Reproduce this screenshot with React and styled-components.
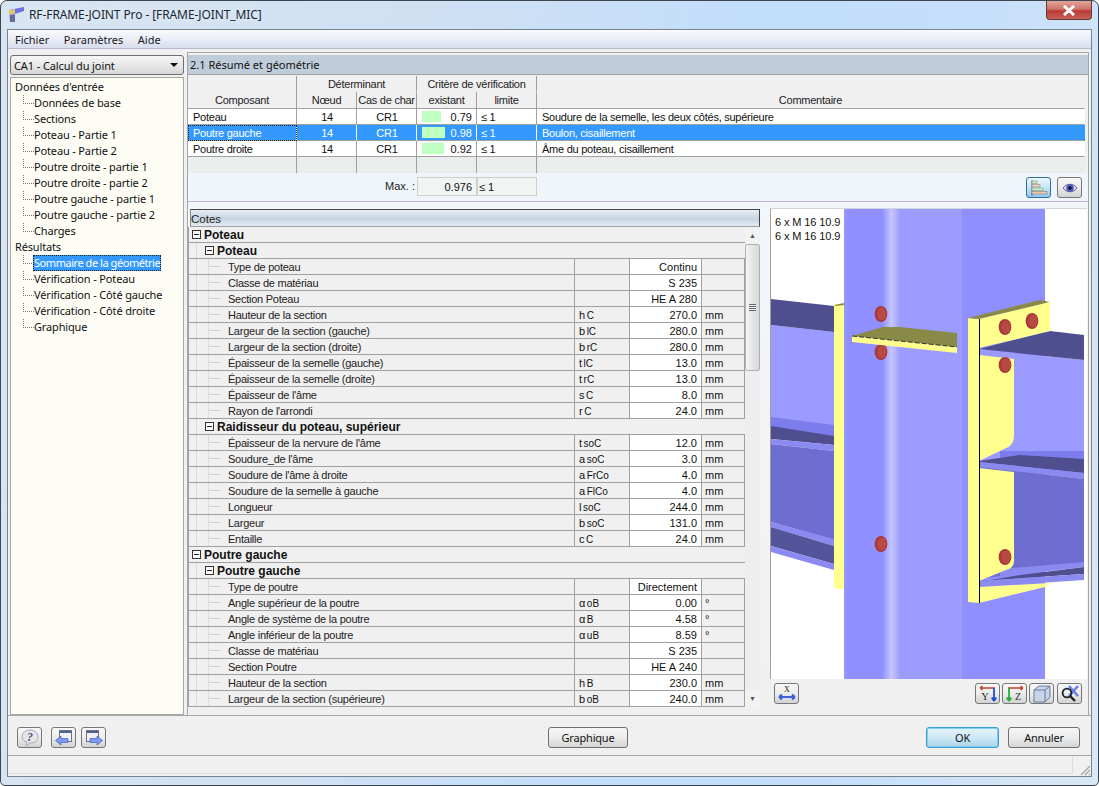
import React from "react";
import styled, { createGlobalStyle } from "styled-components";

const GlobalStyle = createGlobalStyle`
  html, body {
    margin: 0;
    padding: 0;
    background: #fff;
    overflow: hidden;
  }
  * {
    box-sizing: border-box;
  }
`;

const UI_FONT = `"Noto Sans", "Liberation Sans", sans-serif`;
const TABLE_FONT = `"Liberation Sans", Arial, sans-serif`;

const TREE_INPUT = [
  "Données de base",
  "Sections",
  "Poteau - Partie 1",
  "Poteau - Partie 2",
  "Poutre droite - partie 1",
  "Poutre droite - partie 2",
  "Poutre gauche - partie 1",
  "Poutre gauche - partie 2",
  "Charges",
];

const TREE_RESULTS = [
  "Sommaire de la géométrie",
  "Vérification - Poteau",
  "Vérification - Côté gauche",
  "Vérification - Côté droite",
  "Graphique",
];

const SUMMARY = [
  { name: "Poteau", ratio: "0.79", bar: 19, comment: "Soudure de la semelle, les deux côtés, supérieure" },
  { name: "Poutre gauche", ratio: "0.98", bar: 23, comment: "Boulon, cisaillement", selected: true },
  { name: "Poutre droite", ratio: "0.92", bar: 22, comment: "Âme du poteau, cisaillement" },
];

const ROWS = [
  { group: 1, label: "Poteau" },
  { group: 2, label: "Poteau" },
  { label: "Type de poteau", value: "Continu" },
  { label: "Classe de matériau", value: "S 235" },
  { label: "Section Poteau", value: "HE A 280" },
  { label: "Hauteur de la section", sym: "h", sub: "C", value: "270.0", unit: "mm" },
  { label: "Largeur de la section (gauche)", sym: "b", sub: "lC", value: "280.0", unit: "mm" },
  { label: "Largeur de la section (droite)", sym: "b", sub: "rC", value: "280.0", unit: "mm" },
  { label: "Épaisseur de la semelle (gauche)", sym: "t", sub: "lC", value: "13.0", unit: "mm" },
  { label: "Épaisseur de la semelle (droite)", sym: "t", sub: "rC", value: "13.0", unit: "mm" },
  { label: "Épaisseur de l'âme", sym: "s", sub: "C", value: "8.0", unit: "mm" },
  { label: "Rayon de l'arrondi", sym: "r", sub: "C", value: "24.0", unit: "mm" },
  { group: 2, label: "Raidisseur du poteau, supérieur" },
  { label: "Épaisseur de la nervure de l'âme", sym: "t", sub: "soC", value: "12.0", unit: "mm" },
  { label: "Soudure_de l'âme", sym: "a", sub: "soC", value: "3.0", unit: "mm" },
  { label: "Soudure de l'âme à droite", sym: "a", sub: "FrCo", value: "4.0", unit: "mm" },
  { label: "Soudure de la semelle à gauche", sym: "a", sub: "FlCo", value: "4.0", unit: "mm" },
  { label: "Longueur", sym: "l", sub: "soC", value: "244.0", unit: "mm" },
  { label: "Largeur", sym: "b", sub: "soC", value: "131.0", unit: "mm" },
  { label: "Entaille", sym: "c", sub: "C", value: "24.0", unit: "mm" },
  { group: 1, label: "Poutre gauche" },
  { group: 2, label: "Poutre gauche" },
  { label: "Type de poutre", value: "Directement" },
  { label: "Angle supérieur de la poutre", sym: "α", sub: "oB", value: "0.00", unit: "°" },
  { label: "Angle de système de la poutre", sym: "α", sub: "B", value: "4.58", unit: "°" },
  { label: "Angle inférieur de la poutre", sym: "α", sub: "uB", value: "8.59", unit: "°" },
  { label: "Classe de matériau", value: "S 235" },
  { label: "Section Poutre", value: "HE A 240" },
  { label: "Hauteur de la section", sym: "h", sub: "B", value: "230.0", unit: "mm" },
  { label: "Largeur de la section (supérieure)", sym: "b", sub: "oB", value: "240.0", unit: "mm" },
];

const AppIcon = () => (
  <svg width="16" height="16" viewBox="0 0 16 16">
    <path d="M0 3 L15 0 V4 L6 7 V15 H1 Z" fill="#6f6fe6" />
    <path d="M0 3 L6 2 V7 L0 8 Z" fill="#d9c870" />
    <path d="M1 8 H6 V15 H1 Z" fill="#6a6a9c" />
  </svg>
);

const HelpIcon = () => (
  <svg width="20" height="18" viewBox="0 0 20 18">
    <path d="M10 1 C15 1 18 4 18 8 C18 12 15 14 10 14 L6 17 L7 13 C4 12 2 11 2 8 C2 4 5 1 10 1 Z" fill="#e6e6ea" stroke="#a8a8b2" />
    <text x="10" y="12" fontSize="12" fontWeight="bold" fontStyle="italic" textAnchor="middle" fill="#50507e" fontFamily="Liberation Serif">?</text>
  </svg>
);

const WindowArrowIcon = ({ right }) => (
  <svg width="20" height="18" viewBox="0 0 20 18">
    <rect x={right ? 2.5 : 5.5} y="1.5" width="12" height="11" fill="#f0f0f4" stroke="#707080" />
    <rect x={right ? 3 : 6} y="2" width="11" height="2" fill="#4a6492" />
    <path
      d={right ? "M6 9.5 H13 V7 L18.5 11.5 L13 16 V13.5 H6 Z" : "M14 9.5 H7 V7 L1.5 11.5 L7 16 V13.5 H14 Z"}
      fill="#7a9cf4"
      stroke="#4a5ab0"
      strokeWidth="0.7"
    />
  </svg>
);

const BarsIcon = () => (
  <svg width="20" height="18" viewBox="0 0 20 18">
    <path d="M3 1 V17" stroke="#5a6a7a" />
    <rect x="3" y="2" width="5" height="2.5" fill="#d8e8c0" stroke="#7a8a70" strokeWidth="0.5" />
    <rect x="3" y="5.5" width="8" height="2.5" fill="#f0d0c8" stroke="#8a7a70" strokeWidth="0.5" />
    <rect x="3" y="9" width="11" height="2.5" fill="#c8f0c8" stroke="#708a70" strokeWidth="0.5" />
    <rect x="3" y="12.5" width="15" height="2.5" fill="#f0c8b8" stroke="#8a7060" strokeWidth="0.5" />
  </svg>
);

const EyeIcon = () => (
  <svg width="16" height="12" viewBox="0 0 16 12">
    <path d="M1 6 C4 1 12 1 15 6 C12 11 4 11 1 6 Z" fill="#dcdce8" stroke="#50506a" strokeWidth="0.8" />
    <circle cx="8" cy="6" r="3.8" fill="#4a5ac8" />
    <circle cx="8" cy="6" r="1.7" fill="#10102a" />
  </svg>
);

const AxisXIcon = () => (
  <svg width="20" height="18" viewBox="0 0 20 18">
    <text x="10" y="7" fontSize="8" textAnchor="middle" fill="#222" fontFamily="Liberation Serif">X</text>
    <path d="M2 12 H18 M2 12 L5 9.5 M2 12 L5 14.5 M18 12 L15 9.5 M18 12 L15 14.5" stroke="#3f5fd8" strokeWidth="2" fill="none" />
  </svg>
);

const AxisYIcon = () => (
  <svg width="20" height="18" viewBox="0 0 20 18">
    <path d="M2 3 H17 M2 3 L4.5 1 M2 3 L4.5 5" stroke="#c84030" strokeWidth="1.6" fill="none" />
    <path d="M16 3 V16 M16 16 L13.8 12.5 M16 16 L18.2 12.5" stroke="#2050d0" strokeWidth="1.8" fill="none" />
    <text x="7" y="15" fontSize="10" textAnchor="middle" fill="#222" fontFamily="Liberation Serif">Y</text>
  </svg>
);

const AxisZIcon = () => (
  <svg width="20" height="18" viewBox="0 0 20 18">
    <path d="M3 3 H18 M18 3 L15.5 1 M18 3 L15.5 5" stroke="#c84030" strokeWidth="1.6" fill="none" />
    <path d="M4 3 V16 M4 16 L1.8 12.5 M4 16 L6.2 12.5" stroke="#20b040" strokeWidth="1.8" fill="none" />
    <text x="13" y="15" fontSize="10" textAnchor="middle" fill="#333" fontFamily="Liberation Serif">Z</text>
  </svg>
);

const CubeIcon = () => (
  <svg width="20" height="18" viewBox="0 0 20 18">
    <path d="M2 5 L7 1 H18 V12 L13 17 H2 Z" fill="#c8d4e8" stroke="#6a7a98" />
    <path d="M2 5 H13 V17 M13 5 L18 1" fill="none" stroke="#6a7a98" />
  </svg>
);

const ZoomXIcon = () => (
  <svg width="20" height="18" viewBox="0 0 20 18">
    <path d="M9 1 L18 11 M18 1 L9 11" stroke="#6a80e8" strokeWidth="2.6" />
    <circle cx="7" cy="8" r="4.4" fill="none" stroke="#202020" strokeWidth="1.8" />
    <path d="M10 11 L15 16" stroke="#202020" strokeWidth="2.4" />
  </svg>
);

const Bolt = ({ x, y }) => (
  <g>
    <ellipse cx={x} cy={y} rx="6.4" ry="8" fill="#a83a3a" />
    <ellipse cx={x + 1} cy={y} rx="4.6" ry="6.2" fill="#b84a44" />
  </g>
);

// joint drawing, coordinates are the page pixels of the screenshot
const JointDrawing = () => (
  <svg width="315" height="470" viewBox="771 210 315 470">
    <defs>
      <linearGradient id="column" gradientUnits="userSpaceOnUse" x1="844" x2="1045" y1="0" y2="0">
        <stop offset="0" stopColor="#9696ff" />
        <stop offset="0.03" stopColor="#8f8fff" />
        <stop offset="0.19" stopColor="#8f8fff" />
        <stop offset="0.235" stopColor="#c6c6ff" />
        <stop offset="0.28" stopColor="#9c9cff" />
        <stop offset="0.585" stopColor="#9c9cff" />
        <stop offset="0.59" stopColor="#8f8fff" />
        <stop offset="1" stopColor="#8f8fff" />
      </linearGradient>
    </defs>

    {/* left beam */}
    <polygon points="771,326 834,333 834,440 771,430" fill="#9b9bff" />
    <polygon points="771,300 834,307 834,333 771,326" fill="#4f4f90" />
    <polygon points="771,418 834,426 834,438 771,428" fill="#7c7cec" />
    <polygon points="771,427 834,437 834,446 771,440" fill="#4f4f90" />
    <polygon points="771,440 834,446 834,452 771,445" fill="#8a8af0" />
    <polygon points="771,445 834,452 834,541 771,523" fill="#6e6ed0" />
    <polygon points="771,523 834,540 834,547 771,528" fill="#8a8af0" />
    <polygon points="771,528 834,547 834,565 771,547" fill="#54549a" />
    <polygon points="771,547 834,565 834,571 771,553" fill="#8a8af0" />
    <polygon points="834,306 844,304 844,590 837,590 834,588" fill="#ffff8e" />
    <polygon points="834,306 844,304 844,306 836,307" fill="#8a8a48" />

    {/* column */}
    <rect x="844" y="210" width="201" height="470" fill="url(#column)" />

    <Bolt x={881} y={315} />
    <Bolt x={881} y={353} />
    <Bolt x={881} y={545} />

    {/* shelf plate */}
    <polygon points="852,337 883,328 900,328 957,334 957,348" fill="#8a8a48" />
    <polygon points="852,337 957,348 957,354 852,343" fill="#ffff8e" />
    <line x1="852" y1="337" x2="957" y2="348" stroke="#111" strokeWidth="0.8" strokeDasharray="5 2" />

    {/* right beam */}
    <polygon points="979,350 1084,361 1084,480 979,468" fill="#9b9bff" />
    <polygon points="979,350 1050,332 1084,336 1084,361" fill="#4f4f90" />
    <polygon points="1000,452 1084,452 1084,460 1000,460" fill="#7c7cec" />
    <polygon points="979,462 1020,456 1084,460 1084,474 979,463" fill="#4f4f90" />
    <polygon points="979,463 1084,474 1084,480 979,468" fill="#8a8af0" />
    <polygon points="979,468 1084,480 1084,566 979,580" fill="#6e6ed0" />
    <polygon points="1000,570 1084,563 1084,568 1000,578" fill="#8a8af0" />
    <polygon points="979,583 1020,576 1084,568 1084,575 979,582" fill="#4f4f90" />
    <polygon points="979,582 1084,575 1084,581 979,588" fill="#8a8af0" />

    {/* end plate */}
    <polygon points="968,319 979,320 979,604 968,603" fill="#ffff8e" />
    <polygon points="968,319 1040,301 1050,303 979,320" fill="#8a8a48" />
    <polygon points="979,320 1050,303 1050,332 979,349" fill="#ffff8e" />
    <path d="M979 356 L1014 360 V437 Q1014 447 1004 450 L979 462 Z" fill="#ffff8e" />
    <path d="M979 469 L1014 473 V562 Q1014 569 1006 571 L979 582 Z" fill="#ffff8e" />
    <polygon points="979,588 1050,584 1045,588 979,604" fill="#ffff8e" />
    <line x1="979.5" y1="320" x2="979.5" y2="604" stroke="#000" />

    <Bolt x={1005} y={328} />
    <Bolt x={1032} y={322} />
    <Bolt x={1005} y={366} />
    <Bolt x={1005} y={558} />
  </svg>
);

const App = () => {
  return (
    <>
      <GlobalStyle />
      <Window>
        <TitleBar>
          <AppIcon />
          <TitleText>RF-FRAME-JOINT Pro - [FRAME-JOINT_MIC]</TitleText>
          <CloseButton>
            <svg width="14" height="11" viewBox="0 0 14 11">
              <path d="M2 1 L12 10 M12 1 L2 10" stroke="#fff" strokeWidth="3" />
            </svg>
          </CloseButton>
        </TitleBar>

        <Client>
          <MenuBar>
            <MenuItem>Fichier</MenuItem>
            <MenuItem>Paramètres</MenuItem>
            <MenuItem>Aide</MenuItem>
          </MenuBar>

          <Body>
            <LeftPane>
              <Combo>
                CA1 - Calcul du joint
                <ComboArrow />
              </Combo>
              <Tree>
                <TreeRoot>Données d'entrée</TreeRoot>
                {TREE_INPUT.map((item) => (
                  <TreeChild key={item}>
                    <span>{item}</span>
                  </TreeChild>
                ))}
                <TreeRoot>Résultats</TreeRoot>
                {TREE_RESULTS.map((item, i) => (
                  <TreeChild key={item}>
                    <TreeText $selected={i === 0}>{item}</TreeText>
                  </TreeChild>
                ))}
              </Tree>
            </LeftPane>

            <RightPane>
              <SectionTitle>2.1 Résumé et géométrie</SectionTitle>

              <SummaryTable>
                <SummaryHead $span="1 / 3" $column="1" $bottom>Composant</SummaryHead>
                <SummaryHead $column="2 / 4" $noBorderBottom>Déterminant</SummaryHead>
                <SummaryHead $column="4 / 6" $noBorderBottom>Critère de vérification</SummaryHead>
                <SummaryHead $span="1 / 3" $column="6" $bottom $last>Commentaire</SummaryHead>
                <SummaryHead $column="2">Nœud</SummaryHead>
                <SummaryHead $column="3">Cas de char</SummaryHead>
                <SummaryHead $column="4">existant</SummaryHead>
                <SummaryHead $column="5">limite</SummaryHead>

                {SUMMARY.map((row) => (
                  <React.Fragment key={row.name}>
                    <SummaryCell $selected={row.selected} $focus={row.selected}>{row.name}</SummaryCell>
                    <SummaryCell $selected={row.selected} $center>14</SummaryCell>
                    <SummaryCell $selected={row.selected} $center>CR1</SummaryCell>
                    <SummaryCell $selected={row.selected}>
                      <RatioBar $width={row.bar} />
                      <RatioValue>{row.ratio}</RatioValue>
                    </SummaryCell>
                    <SummaryCell $selected={row.selected} $limit>≤ 1</SummaryCell>
                    <SummaryCell $selected={row.selected} $last>{row.comment}</SummaryCell>
                  </React.Fragment>
                ))}

                <EmptyCell />
                <EmptyCell />
                <EmptyCell />
                <EmptyCell />
                <EmptyCell />
                <EmptyCell $last />
              </SummaryTable>

              <MaxRow>
                <MaxLabel>Max. :</MaxLabel>
                <MaxBox $right>0.976</MaxBox>
                <MaxBox>≤ 1</MaxBox>
                <MaxTools>
                  <ToolButton $active>
                    <BarsIcon />
                  </ToolButton>
                  <ToolButton>
                    <EyeIcon />
                  </ToolButton>
                </MaxTools>
              </MaxRow>

              <Lower>
                <DetailPane>
                  <DetailHeader>Cotes</DetailHeader>
                  <DetailBody>
                    <DetailRows>
                      {ROWS.map((row, i) =>
                        row.group ? (
                          <GroupRow key={i} $level={row.group}>
                            <Toggle />
                            {row.label}
                          </GroupRow>
                        ) : (
                          <ParamRow key={i}>
                            <ParamLabel>
                              <TreeTick />
                              {row.label}
                            </ParamLabel>
                            <ParamSymbol>
                              {row.sym}
                              {row.sub && <Sub>{row.sub}</Sub>}
                            </ParamSymbol>
                            <ParamValue>{row.value}</ParamValue>
                            <ParamUnit>{row.unit}</ParamUnit>
                          </ParamRow>
                        )
                      )}
                    </DetailRows>
                    <ScrollBar>
                      <ScrollArrow>▲</ScrollArrow>
                      <ScrollThumb>
                        <ThumbGrip />
                      </ScrollThumb>
                      <ScrollTrack />
                      <ScrollArrow>▼</ScrollArrow>
                    </ScrollBar>
                  </DetailBody>
                </DetailPane>

                <GraphicPane>
                  <GraphicView>
                    <JointDrawing />
                    <BoltNotes>
                      <div>6 x M 16 10.9</div>
                      <div>6 x M 16 10.9</div>
                    </BoltNotes>
                  </GraphicView>
                  <GraphicTools>
                    <ToolButton>
                      <AxisXIcon />
                    </ToolButton>
                    <ToolSpacer />
                    <ToolButton>
                      <AxisYIcon />
                    </ToolButton>
                    <ToolButton>
                      <AxisZIcon />
                    </ToolButton>
                    <ToolButton>
                      <CubeIcon />
                    </ToolButton>
                    <ToolButton $leftGap={1}>
                      <ZoomXIcon />
                    </ToolButton>
                  </GraphicTools>
                </GraphicPane>
              </Lower>
            </RightPane>
          </Body>

          <Footer>
            <FooterTools>
              <ToolButton $rightGap={4}>
                <HelpIcon />
              </ToolButton>
              <ToolButton>
                <WindowArrowIcon />
              </ToolButton>
              <ToolButton>
                <WindowArrowIcon right />
              </ToolButton>
            </FooterTools>
            <DialogButton $width={80} $left={442}>Graphique</DialogButton>
            <FooterActions>
              <DialogButton $width={73} $primary>OK</DialogButton>
              <DialogButton $width={72}>Annuler</DialogButton>
            </FooterActions>
          </Footer>

          <StatusBar>
            <StatusField />
            <ResizeGrip>
              <svg width="12" height="12" viewBox="0 0 12 12">
                <path d="M11 2 L2 11 M11 6 L6 11 M11 10 L10 11" stroke="#a0a8b0" strokeWidth="1.4" />
              </svg>
            </ResizeGrip>
          </StatusBar>
        </Client>
      </Window>
    </>
  );
};

export default App;

const Window = styled.div`
  width: 1099px;
  height: 786px;
  display: flex;
  flex-direction: column;
  padding: 0 6px 8px;
  border: 1px solid #3c4650;
  border-radius: 7px 7px 5px 5px;
  background: linear-gradient(
    100deg,
    #d8e5f2 0%,
    #cfe0f3 35%,
    #c2defb 62%,
    #c6dffa 80%,
    #d9e8f5 100%
  );
  font-family: ${TABLE_FONT};
  font-size: 11px;
  color: #111;
`;

const TitleBar = styled.div`
  position: relative;
  height: 28px;
  flex: none;
  display: flex;
  align-items: center;
  gap: 4px;
  padding: 0 0 0 2px;
`;

const TitleText = styled.div`
  font-family: ${UI_FONT};
  font-size: 12px;
  letter-spacing: -0.1px;
  color: #1c2430;
  margin-top: -1px;
  text-shadow: 0 0 6px #eef5fc;
`;

const CloseButton = styled.div`
  position: absolute;
  top: 0;
  right: 0;
  width: 46px;
  height: 19px;
  display: flex;
  align-items: center;
  justify-content: center;
  border: 1px solid #6a3a30;
  border-top: none;
  border-radius: 0 0 4px 4px;
  background: linear-gradient(#e2a49a 0%, #cf7468 45%, #b93a34 55%, #c8605a 100%);
`;

const Client = styled.div`
  flex: 1;
  min-height: 0;
  display: flex;
  flex-direction: column;
  border: 1px solid #77838f;
  background: #f0f0f0;
`;

const MenuBar = styled.div`
  height: 19px;
  flex: none;
  display: flex;
  align-items: center;
  gap: 14.5px;
  padding-left: 7px;
  background: linear-gradient(#fafafc 0%, #eceef6 45%, #d9deee 100%);
  border-bottom: 1px solid #b6bcd0;
`;

const MenuItem = styled.span`
  font-family: ${UI_FONT};
  font-size: 11px;
  color: #1a1a24;
`;

const Body = styled.div`
  height: 667px;
  flex: none;
  display: flex;
  gap: 3px;
  padding: 3px 2px 0 2px;
  border-bottom: 1px solid #a6a6a6;
`;

const LeftPane = styled.div`
  width: 174px;
  flex: none;
  display: flex;
  flex-direction: column;
  padding-top: 3px;
`;

const Combo = styled.div`
  position: relative;
  height: 20px;
  flex: none;
  display: flex;
  align-items: center;
  padding-left: 3px;
  font-family: ${UI_FONT};
  font-size: 11px;
  letter-spacing: -0.1px;
  border: 1px solid #707070;
  border-radius: 3px;
  background: linear-gradient(#f6f6f6 0%, #e8e8e8 50%, #d6d6d6 100%);
`;

const ComboArrow = styled.span`
  position: absolute;
  right: 5px;
  top: 7px;
  border-left: 4px solid transparent;
  border-right: 4px solid transparent;
  border-top: 4px solid #111;
`;

const Tree = styled.div`
  flex: 1;
  margin-top: 2px;
  padding: 1px 0 0 4px;
  background: #fdfdf5;
  border: 1px solid #a6a6a6;
  font-family: ${UI_FONT};
  font-size: 11px;
  letter-spacing: -0.15px;
`;

const TreeRoot = styled.div`
  height: 16px;
  line-height: 16px;
  color: #111;
`;

const TreeChild = styled.div`
  position: relative;
  height: 16px;
  line-height: 16px;
  padding-left: 19px;
  white-space: nowrap;

  &::before {
    content: "";
    position: absolute;
    left: 8px;
    top: 0;
    width: 10px;
    height: 8px;
    border-left: 1px dotted #777;
    border-bottom: 1px dotted #777;
  }
`;

const TreeText = styled.span`
  display: inline-block;
  height: 16px;
  padding: 0 1px;
  margin-left: -1px;
  letter-spacing: ${(props) => (props.$selected ? "-0.45px" : "inherit")};
  color: ${(props) => (props.$selected ? "#fff" : "inherit")};
  background: ${(props) => (props.$selected ? "#3399ff" : "transparent")};
  outline: ${(props) => (props.$selected ? "1px dotted #222" : "none")};
  outline-offset: -1px;
`;

const RightPane = styled.div`
  flex: 1;
  min-width: 0;
  display: flex;
  flex-direction: column;
  border: 1px solid #a6a6a6;
  border-bottom: none;
  padding-top: 2px;
`;

const SectionTitle = styled.div`
  height: 20px;
  flex: none;
  display: flex;
  align-items: center;
  padding-left: 2px;
  font-family: ${UI_FONT};
  font-size: 11px;
  background: #bfcddb;
  border-bottom: 1px solid #a0a0a0;
`;

const SummaryTable = styled.div`
  display: grid;
  grid-template-columns: 109px 60px 60px 60px 60px 548px;
  grid-template-rows: 16px 17px 16px 16px 16px 16px;
  margin-top: 1px;
  flex: none;
  letter-spacing: -0.25px;
`;

const SummaryHead = styled.div`
  grid-column: ${(props) => props.$column};
  grid-row: ${(props) => props.$span || "auto"};
  display: flex;
  align-items: ${(props) => (props.$bottom ? "flex-end" : "center")};
  justify-content: center;
  padding-bottom: ${(props) => (props.$bottom ? "2px" : "0")};
  background: #f0f0f0;
  color: #222;
  border-right: 1px solid ${(props) => (props.$last ? "transparent" : "#a0a0a0")};
  border-bottom: 1px solid ${(props) => (props.$noBorderBottom ? "transparent" : "#a0a0a0")};
  white-space: nowrap;
`;

const SummaryCell = styled.div`
  position: relative;
  display: flex;
  align-items: center;
  justify-content: ${(props) => (props.$center ? "center" : "flex-start")};
  padding: 0 4px 0 ${(props) => (props.$limit ? "4px" : "5px")};
  white-space: nowrap;
  color: ${(props) => (props.$selected ? "#fff" : "#111")};
  background: ${(props) => (props.$selected ? "#3399ff" : "#fff")};
  border-right: 1px solid ${(props) => (props.$last ? "transparent" : props.$selected ? "#fff" : "#a0a0a0")};
  border-bottom: 1px solid #a0a0a0;
  outline: ${(props) => (props.$focus ? "1px dotted #222" : "none")};
  outline-offset: -1px;
`;

const RatioBar = styled.span`
  width: ${(props) => props.$width}px;
  height: 11px;
  background: #bfffbf;
`;

const RatioValue = styled.span`
  margin-left: auto;
  letter-spacing: 0;
`;

const EmptyCell = styled.div`
  background: #e9eeec;
  border-right: 1px solid ${(props) => (props.$last ? "transparent" : "#a0a0a0")};
`;

const MaxRow = styled.div`
  height: 29px;
  flex: none;
  display: flex;
  align-items: flex-start;
  padding-top: 4px;
  background: #f0f5fb;
  border-bottom: 1px solid #b4b8e8;
`;

const MaxLabel = styled.span`
  width: 229px;
  text-align: right;
  padding-right: 2px;
  margin-top: 3px;
  color: #222;
`;

const MaxBox = styled.div`
  width: 60px;
  height: 19px;
  display: flex;
  align-items: center;
  justify-content: ${(props) => (props.$right ? "flex-end" : "flex-start")};
  padding: 0 ${(props) => (props.$right ? "4px" : "1px")};
  background: #f0f5f4;
  border: 1px solid #cdd0cd;
`;

const MaxTools = styled.div`
  margin-left: auto;
  margin-right: 6px;
  display: flex;
  gap: 6px;
`;

const ToolButton = styled.div`
  width: 25px;
  height: 21px;
  flex: none;
  display: flex;
  align-items: center;
  justify-content: center;
  margin-left: ${(props) => props.$leftGap || 0}px;
  margin-right: ${(props) => props.$rightGap || 0}px;
  border: 1px solid ${(props) => (props.$active ? "#2f6f9f" : "#777")};
  border-radius: 3px;
  background: ${(props) =>
    props.$active
      ? "linear-gradient(#eaf6fd 0%, #c6e6f8 50%, #8fc8ec 100%)"
      : "linear-gradient(#f8f8f8 0%, #ececec 50%, #d2d2d2 100%)"};
`;

const Lower = styled.div`
  flex: 1;
  min-height: 0;
  display: flex;
  gap: 10px;
  background: linear-gradient(#f3f7fb 0%, #f0f0f0 100%);
`;

const DetailPane = styled.div`
  width: 572px;
  flex: none;
  padding-top: 7px;
`;

const DetailHeader = styled.div`
  height: 18px;
  margin-left: 2px;
  line-height: 18px;
  font-size: 11.5px;
  color: #222;
  border-top: 1px solid #444;
  border-right: 1px solid #444;
  border-left: 1px solid #888;
  border-bottom: 1px solid #a0a0a0;
  background: linear-gradient(#e6edf4 0%, #c6d4e1 55%, #e4ebf2 100%);
`;

const DetailBody = styled.div`
  display: flex;
`;

const DetailRows = styled.div`
  width: 557px;
  flex: none;
  border-left: 1px solid #a0a0a0;
  background: #f0f0f0;
`;

const GroupRow = styled.div`
  height: 16px;
  display: flex;
  align-items: center;
  padding-left: ${(props) => (props.$level === 1 ? "3px" : "16px")};
  font-weight: bold;
  font-size: 12px;
  color: #111;
  border-bottom: 1px solid #a0a0a0;
  background: ${(props) =>
    props.$level === 1
      ? "none"
      : "linear-gradient(#dcdcdc, #dcdcdc) 7px 0 / 1px 100% no-repeat"};
`;

const Toggle = styled.span`
  position: relative;
  width: 9px;
  height: 9px;
  margin-right: 3px;
  border: 1px solid #333;
  background: #fafafa;

  &::after {
    content: "";
    position: absolute;
    left: 1px;
    right: 1px;
    top: 3px;
    height: 1px;
    background: #222;
  }
`;

const ParamRow = styled.div`
  height: 16px;
  display: grid;
  grid-template-columns: 385px 55px 72px 44px;
  border-bottom: 1px solid #a0a0a0;
`;

const ParamLabel = styled.div`
  display: flex;
  align-items: center;
  color: #222;
  white-space: nowrap;
  letter-spacing: -0.25px;
  background:
    linear-gradient(#dcdcdc, #dcdcdc) 7px 0 / 1px 100% no-repeat,
    linear-gradient(#dcdcdc, #dcdcdc) 19px 0 / 1px 100% no-repeat;
`;

const TreeTick = styled.span`
  width: 11px;
  height: 1px;
  margin: 0 8px 0 20px;
  background: #cfcfcf;
`;

const ParamSymbol = styled.div`
  display: flex;
  align-items: center;
  padding-left: 4px;
  border-left: 1px solid #a0a0a0;
`;

const Sub = styled.span`
  font-size: 10px;
  margin-left: 1.5px;
  position: relative;
  top: 1px;
`;

const ParamValue = styled.div`
  display: flex;
  align-items: center;
  justify-content: flex-end;
  padding-right: 4px;
  background: #fff;
  border-left: 1px solid #a0a0a0;
  white-space: nowrap;
`;

const ParamUnit = styled.div`
  display: flex;
  align-items: center;
  padding-left: 3px;
  border-left: 1px solid #a0a0a0;
  border-right: 1px solid #a0a0a0;
`;

const ScrollBar = styled.div`
  width: 15px;
  flex: none;
  display: flex;
  flex-direction: column;
  background: #f2f2f2;
`;

const ScrollArrow = styled.div`
  height: 17px;
  flex: none;
  display: flex;
  align-items: center;
  justify-content: center;
  font-size: 7px;
  color: #555;
`;

const ScrollThumb = styled.div`
  height: 127px;
  flex: none;
  display: flex;
  align-items: center;
  justify-content: center;
  border: 1px solid #b0b0b0;
  border-radius: 2px;
  background: linear-gradient(90deg, #f4f4f4 0%, #e6e6e6 50%, #d8d8d8 100%);
`;

const ThumbGrip = styled.span`
  width: 7px;
  height: 7px;
  background: repeating-linear-gradient(#666 0 1px, #f0f0f0 1px 2px);
`;

const ScrollTrack = styled.div`
  flex: 1;
  background: repeating-conic-gradient(#f4f4f4 0% 25%, #e8e8e8 0% 50%) 0 0 / 2px 2px;
`;

const GraphicPane = styled.div`
  flex: 1;
  min-width: 0;
  display: flex;
  flex-direction: column;
  padding-top: 6px;
`;

const GraphicView = styled.div`
  position: relative;
  height: 471px;
  flex: none;
  background: #fff;
  border-left: 1px solid #a0a0a0;
  border-top: 1px solid #d0d4dc;
  margin-right: 1px;
  line-height: 0;
`;

const BoltNotes = styled.div`
  position: absolute;
  left: 4px;
  top: 6px;
  font-size: 11px;
  line-height: 14px;
  letter-spacing: -0.1px;
  color: #111;
`;

const GraphicTools = styled.div`
  display: flex;
  gap: 2px;
  padding: 4px 6px 0 4px;
`;

const ToolSpacer = styled.div`
  flex: 1;
`;

const Footer = styled.div`
  height: 39px;
  flex: none;
  display: flex;
  align-items: flex-start;
  padding: 11px 11px 0 9px;
`;

const FooterTools = styled.div`
  display: flex;
  gap: 5px;
  width: 89px;
  flex: none;
`;

const FooterActions = styled.div`
  margin-left: auto;
  display: flex;
  gap: 9px;
`;

const DialogButton = styled.div`
  width: ${(props) => props.$width}px;
  height: 21px;
  flex: none;
  display: flex;
  align-items: center;
  justify-content: center;
  margin-left: ${(props) => props.$left || 0}px;
  font-family: ${UI_FONT};
  font-size: 11px;
  letter-spacing: -0.2px;
  color: #111;
  border: 1px solid ${(props) => (props.$primary ? "#3c9ed0" : "#707070")};
  border-radius: 3px;
  box-shadow: ${(props) => (props.$primary ? "inset 0 0 0 1px #7fd0f4" : "none")};
  background: ${(props) =>
    props.$primary
      ? "linear-gradient(#e6f4fb 0%, #cfe8f5 50%, #a8d4ea 100%)"
      : "linear-gradient(#f6f6f6 0%, #ececec 50%, #d4d4d4 100%)"};
`;

const StatusBar = styled.div`
  flex: 1;
  min-height: 0;
  display: flex;
  border-top: 1px solid #a6a6a6;
`;

const StatusField = styled.div`
  width: 1064px;
  margin: 0 0 2px 1px;
  border-right: 1px solid #dcdcdc;
  border-bottom: 1px solid #dcdcdc;
`;

const ResizeGrip = styled.div`
  flex: 1;
  display: flex;
  align-items: flex-end;
  justify-content: flex-end;
`;
